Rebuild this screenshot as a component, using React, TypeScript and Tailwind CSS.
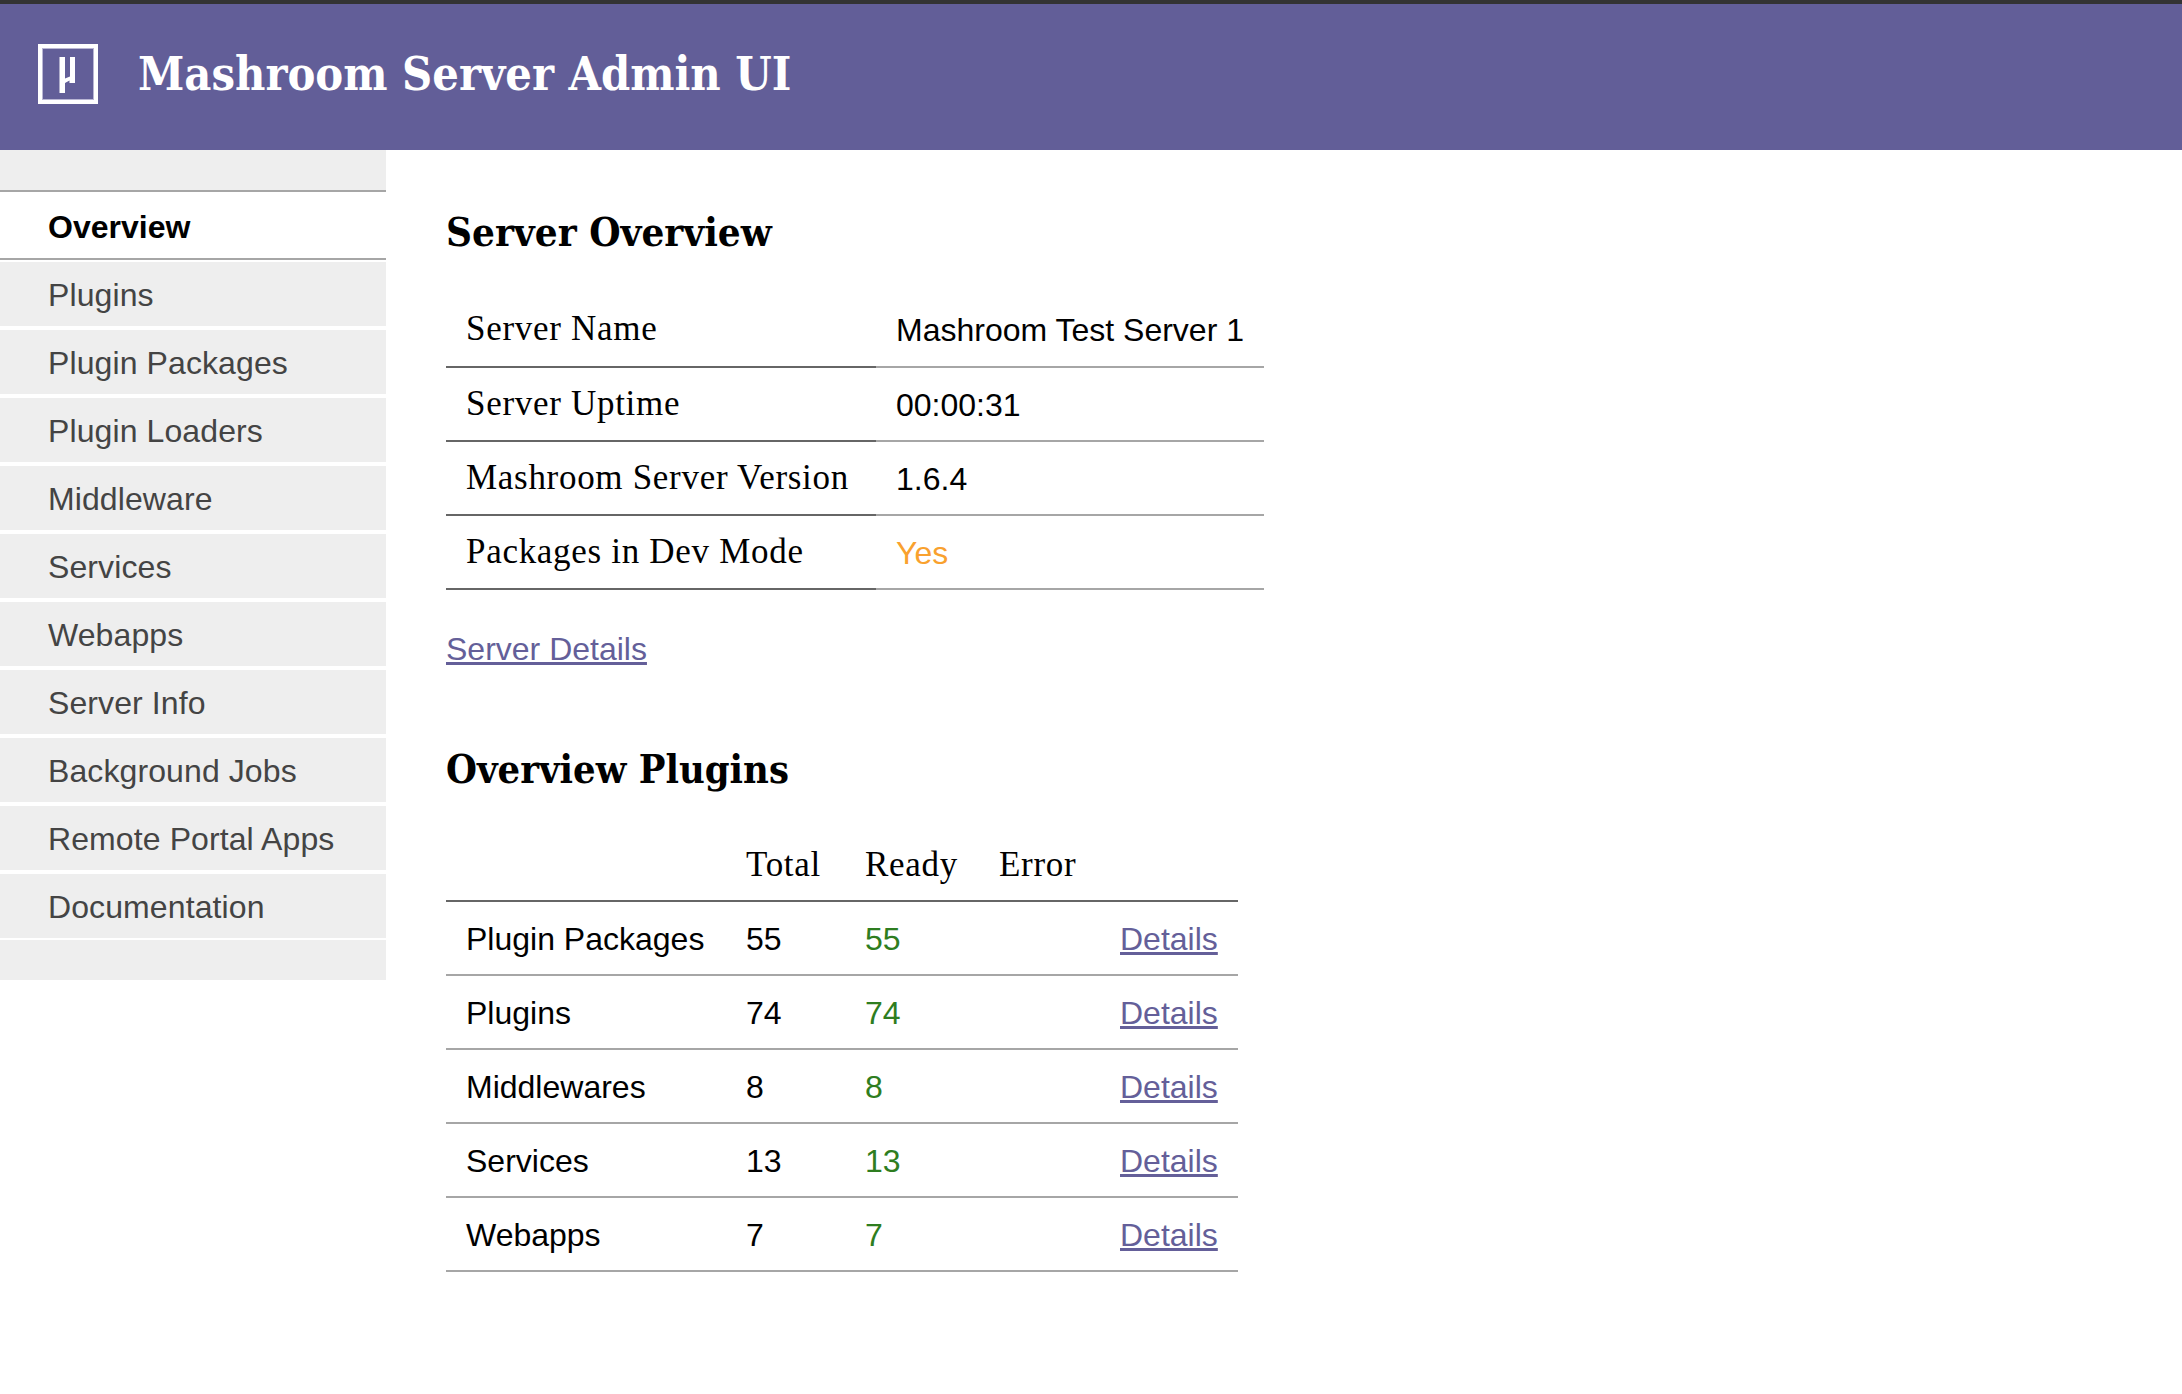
const navItems = [
  'Plugins',
  'Plugin Packages',
  'Plugin Loaders',
  'Middleware',
  'Services',
  'Webapps',
  'Server Info',
  'Background Jobs',
  'Remote Portal Apps',
  'Documentation',
]

const serverRows = [
  { label: 'Server Name', value: 'Mashroom Test Server 1' },
  { label: 'Server Uptime', value: '00:00:31' },
  { label: 'Mashroom Server Version', value: '1.6.4' },
  { label: 'Packages in Dev Mode', value: 'Yes', warn: true },
]

const pluginRows = [
  { name: 'Plugin Packages', total: 55, ready: 55 },
  { name: 'Plugins', total: 74, ready: 74 },
  { name: 'Middlewares', total: 8, ready: 8 },
  { name: 'Services', total: 13, ready: 13 },
  { name: 'Webapps', total: 7, ready: 7 },
]

const serif = "font-['Liberation_Serif',serif]"
const boldSerif = "font-['DejaVu_Serif_Condensed','DejaVu_Serif',serif]"
const thClass = `h-[74px] px-5 text-left align-middle font-normal text-[35px] tracking-[0.7px] text-black ${serif}`
const tdClass = 'h-[74px] px-5 pt-px align-middle border-b-2 border-[#a6a6a6]'

const Logo = () => (
  <svg width="60" height="60" viewBox="0 0 60 60" className="shrink-0">
    <rect x="2" y="2" width="56" height="56" fill="none" stroke="#ffffff" strokeWidth="4" />
    <rect x="4.5" y="4.5" width="51" height="51" fill="none" stroke="#b9b6d4" strokeWidth="1" />
    <path d="M21.5 13H27V34.5L32 32.5V13H37V39H31.5V36.5L27 39V49H21.5Z" fill="#ffffff" />
  </svg>
)

const App = () => {
  return (
    <div className="min-h-[1394px] bg-white font-['Liberation_Sans',sans-serif] text-[32px] text-black">
      <header className="h-[150px] border-t-4 border-[#333333] bg-[#625e98] flex items-start pl-[38px] pt-[40px]">
        <Logo />
        <h1 className={`ml-[40px] mt-[3px] text-[46.5px] leading-[54px] font-bold text-white ${boldSerif}`}>
          Mashroom Server Admin UI
        </h1>
      </header>

      <div className="flex items-start">
        <nav className="w-[386px] shrink-0 bg-[#eeeeee]">
          <div className="h-10" />
          <div className="h-[70px] bg-white border-y-2 border-[#a6a6a6] pl-12 pt-[3px] flex items-center font-bold text-black">
            Overview
          </div>
          <ul className="flex flex-col gap-1 bg-white py-[2px]">
            {navItems.map((item) => (
              <li key={item} className="h-16 bg-[#eeeeee] pl-12 pt-[2px] flex items-center tracking-[0.1px] text-[#444444]">
                {item}
              </li>
            ))}
          </ul>
          <div className="h-10" />
        </nav>

        <main className="pl-[60px]">
          <h2 className={`mt-[58px] text-[40px] leading-[48px] font-bold ${boldSerif}`}>Server Overview</h2>
          <table className="mt-[37px] border-collapse">
            <tbody>
              {serverRows.map((row) => (
                <tr key={row.label}>
                  <th className={`${thClass} w-[430px] border-b-2 border-[#666666]`}>{row.label}</th>
                  <td className={`${tdClass} w-[388px] ${row.warn ? 'text-[#f9a12e]' : ''}`}>{row.value}</td>
                </tr>
              ))}
            </tbody>
          </table>
          <a href="#" className="mt-[39px] block w-fit leading-[40px] text-[#645f99] underline">
            Server Details
          </a>

          <h2 className={`mt-[76px] text-[39.5px] leading-[48px] font-bold ${boldSerif}`}>Overview Plugins</h2>
          <table className="mt-[34px] border-collapse">
            <thead>
              <tr className="border-b-2 border-[#666666]">
                <th className={`${thClass} w-[280px] pt-[3px]`} />
                <th className={`${thClass} w-[119px] pt-[3px]`}>Total</th>
                <th className={`${thClass} w-[134px] pt-[3px]`}>Ready</th>
                <th className={`${thClass} w-[121px] pt-[3px]`}>Error</th>
                <th className={`${thClass} w-[138px] pt-[3px]`} />
              </tr>
            </thead>
            <tbody>
              {pluginRows.map((row) => (
                <tr key={row.name}>
                  <td className={tdClass}>{row.name}</td>
                  <td className={tdClass}>{row.total}</td>
                  <td className={`${tdClass} text-[#2e7d20]`}>{row.ready}</td>
                  <td className={tdClass} />
                  <td className={tdClass}>
                    <a href="#" className="text-[#645f99] underline">
                      Details
                    </a>
                  </td>
                </tr>
              ))}
            </tbody>
          </table>
        </main>
      </div>
    </div>
  )
}

export default App
